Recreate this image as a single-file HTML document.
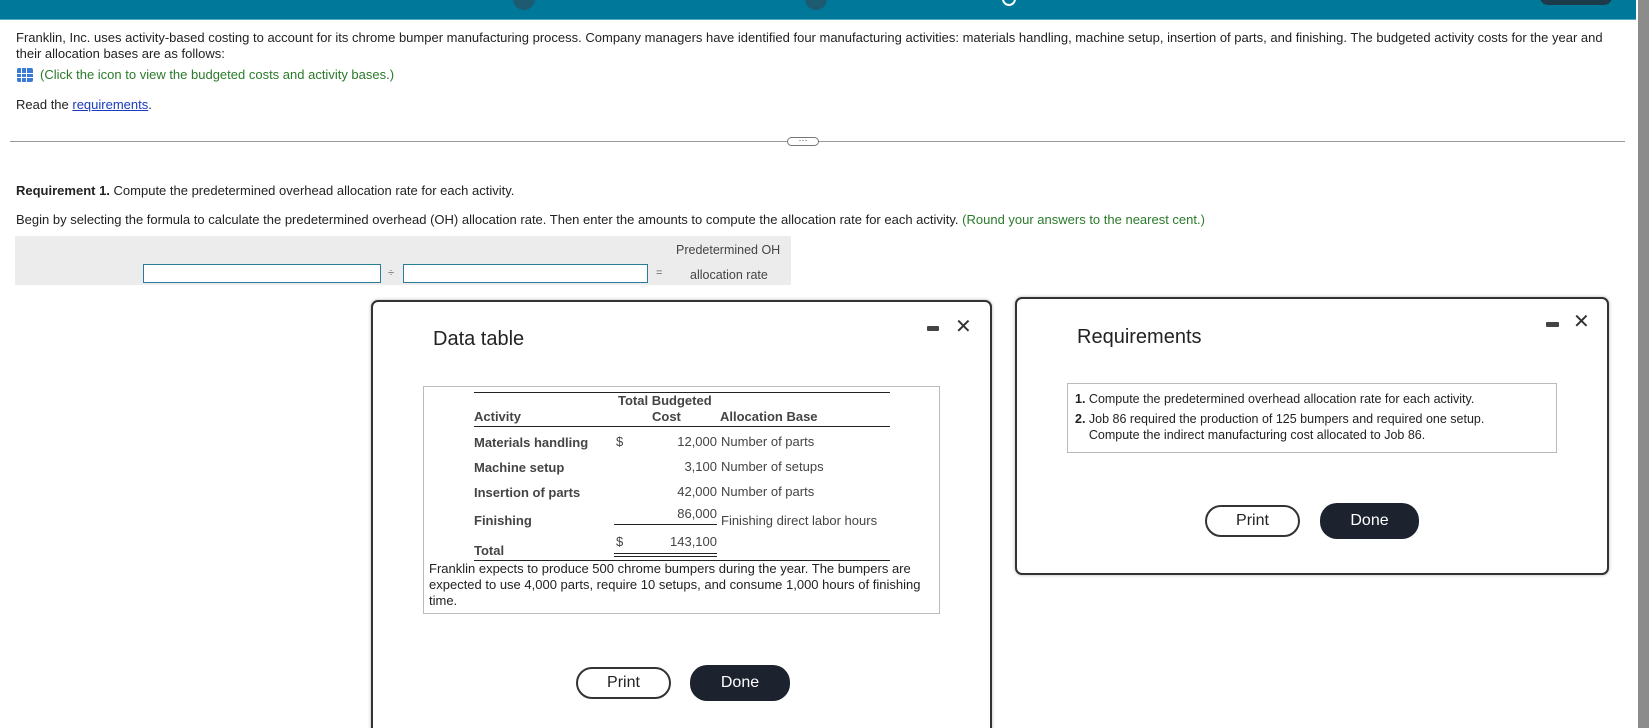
<!DOCTYPE html>
<html style="overflow:hidden;height:728px"><head><meta charset="utf-8"><style>
*{margin:0;padding:0;box-sizing:border-box}
body{width:1649px;height:728px;position:relative;overflow:hidden;background:#fff;font-family:"Liberation Sans",Arial,sans-serif;color:#222;font-size:13px}
.a{position:absolute;white-space:nowrap}
.bar{position:absolute;left:0;top:0;width:1636px;height:20px;background:#00789a;border-bottom:1px solid #5aa9c0}
.sb{position:absolute;left:1638px;top:0;width:11px;height:728px;background:#8c8c8c}
.modal{position:absolute;background:#fff;border:2px solid #333;border-radius:7px;box-shadow:0 0 3px rgba(0,0,0,.3)}
.btn{position:absolute;border-radius:17px;font-size:16px;text-align:center}
.pr{border:2px solid #333;background:#fff;color:#222}
.dn{background:#1c232e;color:#fff}
.bold{font-weight:bold;color:#444}
</style></head><body>
<div class="bar"></div>
<div class="a" style="left:513px;top:-12px;width:22px;height:22px;border-radius:50%;background:#1e5a70"></div>
<div class="a" style="left:805px;top:-12px;width:22px;height:22px;border-radius:50%;background:#1e5a70"></div>
<div class="a" style="left:1002px;top:-8px;width:14px;height:14px;border-radius:50%;border:2px solid #fff"></div>
<div class="a" style="left:1540px;top:-12px;width:72px;height:17px;border-radius:8px;background:#1c3a4a"></div>
<div class="sb"></div>

<div class="a" style="left:16px;top:30px;font-size:13px;line-height:16px">Franklin, Inc. uses activity-based costing to account for its chrome bumper manufacturing process. Company managers have identified four manufacturing activities: materials handling, machine setup, insertion of parts, and finishing. The budgeted activity costs for the year and<br>their allocation bases are as follows:</div>
<div class="a" style="left:17px;top:68px;width:16px;height:14px;background:#3a7bd5;border-radius:2px;background-image:linear-gradient(90deg,transparent 4px,#fff 4px,#fff 5px,transparent 5px,transparent 9px,#fff 9px,#fff 10px,transparent 10px),linear-gradient(0deg,transparent 4px,#fff 4px,#fff 5px,transparent 5px,transparent 8px,#fff 8px,#fff 9px,transparent 9px)"></div>
<div class="a" style="left:40px;top:67px;font-size:13px;color:#2b7a2b">(Click the icon to view the budgeted costs and activity bases.)</div>
<div class="a" style="left:16px;top:97px;font-size:13px">Read the <span style="color:#1a3bbf;text-decoration:underline">requirements</span>.</div>

<div class="a" style="left:10px;top:141px;width:1615px;height:1px;background:#999"></div>
<div class="a" style="left:787px;top:137px;width:32px;height:9px;border:1px solid #777;border-radius:5px;background:#fff;font-size:9px;line-height:5px;text-align:center;color:#444">···</div>

<div class="a" style="left:16px;top:183px;font-size:13px"><b>Requirement 1.</b> Compute the predetermined overhead allocation rate for each activity.</div>
<div class="a" style="left:16px;top:212px;font-size:13px">Begin by selecting the formula to calculate the predetermined overhead (OH) allocation rate. Then enter the amounts to compute the allocation rate for each activity. <span style="color:#2b7a2b">(Round your answers to the nearest cent.)</span></div>
<div class="a" style="left:15px;top:236px;width:776px;height:49px;background:#ececec"></div>
<div class="a" style="left:143px;top:264px;width:238px;height:19px;border:1px solid #2a7a9a;background:#fff"></div>
<div class="a" style="left:388px;top:267px;font-size:11px;color:#666">÷</div>
<div class="a" style="left:403px;top:264px;width:245px;height:19px;border:1px solid #2a7a9a;background:#fff"></div>
<div class="a" style="left:656px;top:267px;font-size:11px;color:#666">=</div>
<div class="a" style="left:676px;top:243px;font-size:12.5px;color:#444">Predetermined OH</div>
<div class="a" style="left:690px;top:268px;font-size:12.5px;color:#444">allocation rate</div>

<!-- Data table modal -->
<div class="modal" style="left:371px;top:300px;width:621px;height:440px"></div>
<div class="a" style="left:433px;top:328px;font-size:20px;color:#222">Data table</div>
<div class="a" style="left:927px;top:326px;width:12px;height:5px;background:#444;border-radius:1px"></div>
<div class="a" style="left:955px;top:314px;font-size:20px;color:#333">✕</div>
<div class="a" style="left:423px;top:386px;width:517px;height:228px;border:1px solid #bbb"></div>
<div class="a" style="left:474px;top:392px;width:416px;height:1px;background:#222"></div>
<div class="a" style="left:474px;top:426px;width:416px;height:1px;background:#222"></div>
<div class="a bold" style="left:618px;top:393px;font-size:13px">Total Budgeted</div>
<div class="a bold" style="left:474px;top:409px">Activity</div>
<div class="a bold" style="left:652px;top:409px">Cost</div>
<div class="a bold" style="left:720px;top:409px">Allocation Base</div>
<div class="a bold" style="left:474px;top:435px">Materials handling</div>
<div class="a bold" style="left:474px;top:460px">Machine setup</div>
<div class="a bold" style="left:474px;top:485px">Insertion of parts</div>
<div class="a bold" style="left:474px;top:513px">Finishing</div>
<div class="a bold" style="left:474px;top:543px">Total</div>
<div class="a" style="left:616px;top:434px;color:#444">$</div>
<div class="a" style="left:616px;top:534px;color:#444">$</div>
<div class="a" style="left:600px;top:434px;width:117px;text-align:right;color:#444">12,000</div>
<div class="a" style="left:600px;top:459px;width:117px;text-align:right;color:#444">3,100</div>
<div class="a" style="left:600px;top:484px;width:117px;text-align:right;color:#444">42,000</div>
<div class="a" style="left:600px;top:506px;width:117px;text-align:right;color:#444">86,000</div>
<div class="a" style="left:600px;top:534px;width:117px;text-align:right;color:#444">143,100</div>
<div class="a" style="left:721px;top:434px;color:#444">Number of parts</div>
<div class="a" style="left:721px;top:459px;color:#444">Number of setups</div>
<div class="a" style="left:721px;top:484px;color:#444">Number of parts</div>
<div class="a" style="left:721px;top:513px;color:#444">Finishing direct labor hours</div>
<div class="a" style="left:614px;top:524px;width:103px;height:1px;background:#222"></div>
<div class="a" style="left:614px;top:553px;width:103px;height:1px;background:#222"></div>
<div class="a" style="left:614px;top:556px;width:103px;height:1px;background:#222"></div>
<div class="a" style="left:474px;top:560px;width:416px;height:1px;background:#222"></div>
<div class="a" style="left:429px;top:561px;font-size:13px;line-height:16px;color:#222">Franklin expects to produce 500 chrome bumpers during the year. The bumpers are<br>expected to use 4,000 parts, require 10 setups, and consume 1,000 hours of finishing<br>time.</div>
<div class="btn pr" style="left:576px;top:667px;width:95px;height:32px;line-height:28px">Print</div>
<div class="btn dn" style="left:690px;top:665px;width:100px;height:36px;line-height:36px">Done</div>

<!-- Requirements modal -->
<div class="modal" style="left:1015px;top:297px;width:594px;height:278px"></div>
<div class="a" style="left:1077px;top:326px;font-size:20px;color:#222">Requirements</div>
<div class="a" style="left:1546px;top:322px;width:13px;height:5px;background:#444;border-radius:1px"></div>
<div class="a" style="left:1573px;top:309px;font-size:20px;color:#333">✕</div>
<div class="a" style="left:1067px;top:383px;width:490px;height:70px;border:1px solid #bbb"></div>
<div class="a" style="left:1075px;top:391px;font-size:12.5px;line-height:17px"><b>1.</b> Compute the predetermined overhead allocation rate for each activity.</div>
<div class="a" style="left:1075px;top:411px;font-size:12.5px;line-height:16px"><b>2.</b> Job 86 required the production of 125 bumpers and required one setup.<br>&nbsp;&nbsp;&nbsp;&nbsp;Compute the indirect manufacturing cost allocated to Job 86.</div>
<div class="btn pr" style="left:1205px;top:505px;width:95px;height:32px;line-height:28px">Print</div>
<div class="btn dn" style="left:1320px;top:503px;width:99px;height:36px;line-height:36px">Done</div>
</body></html>
